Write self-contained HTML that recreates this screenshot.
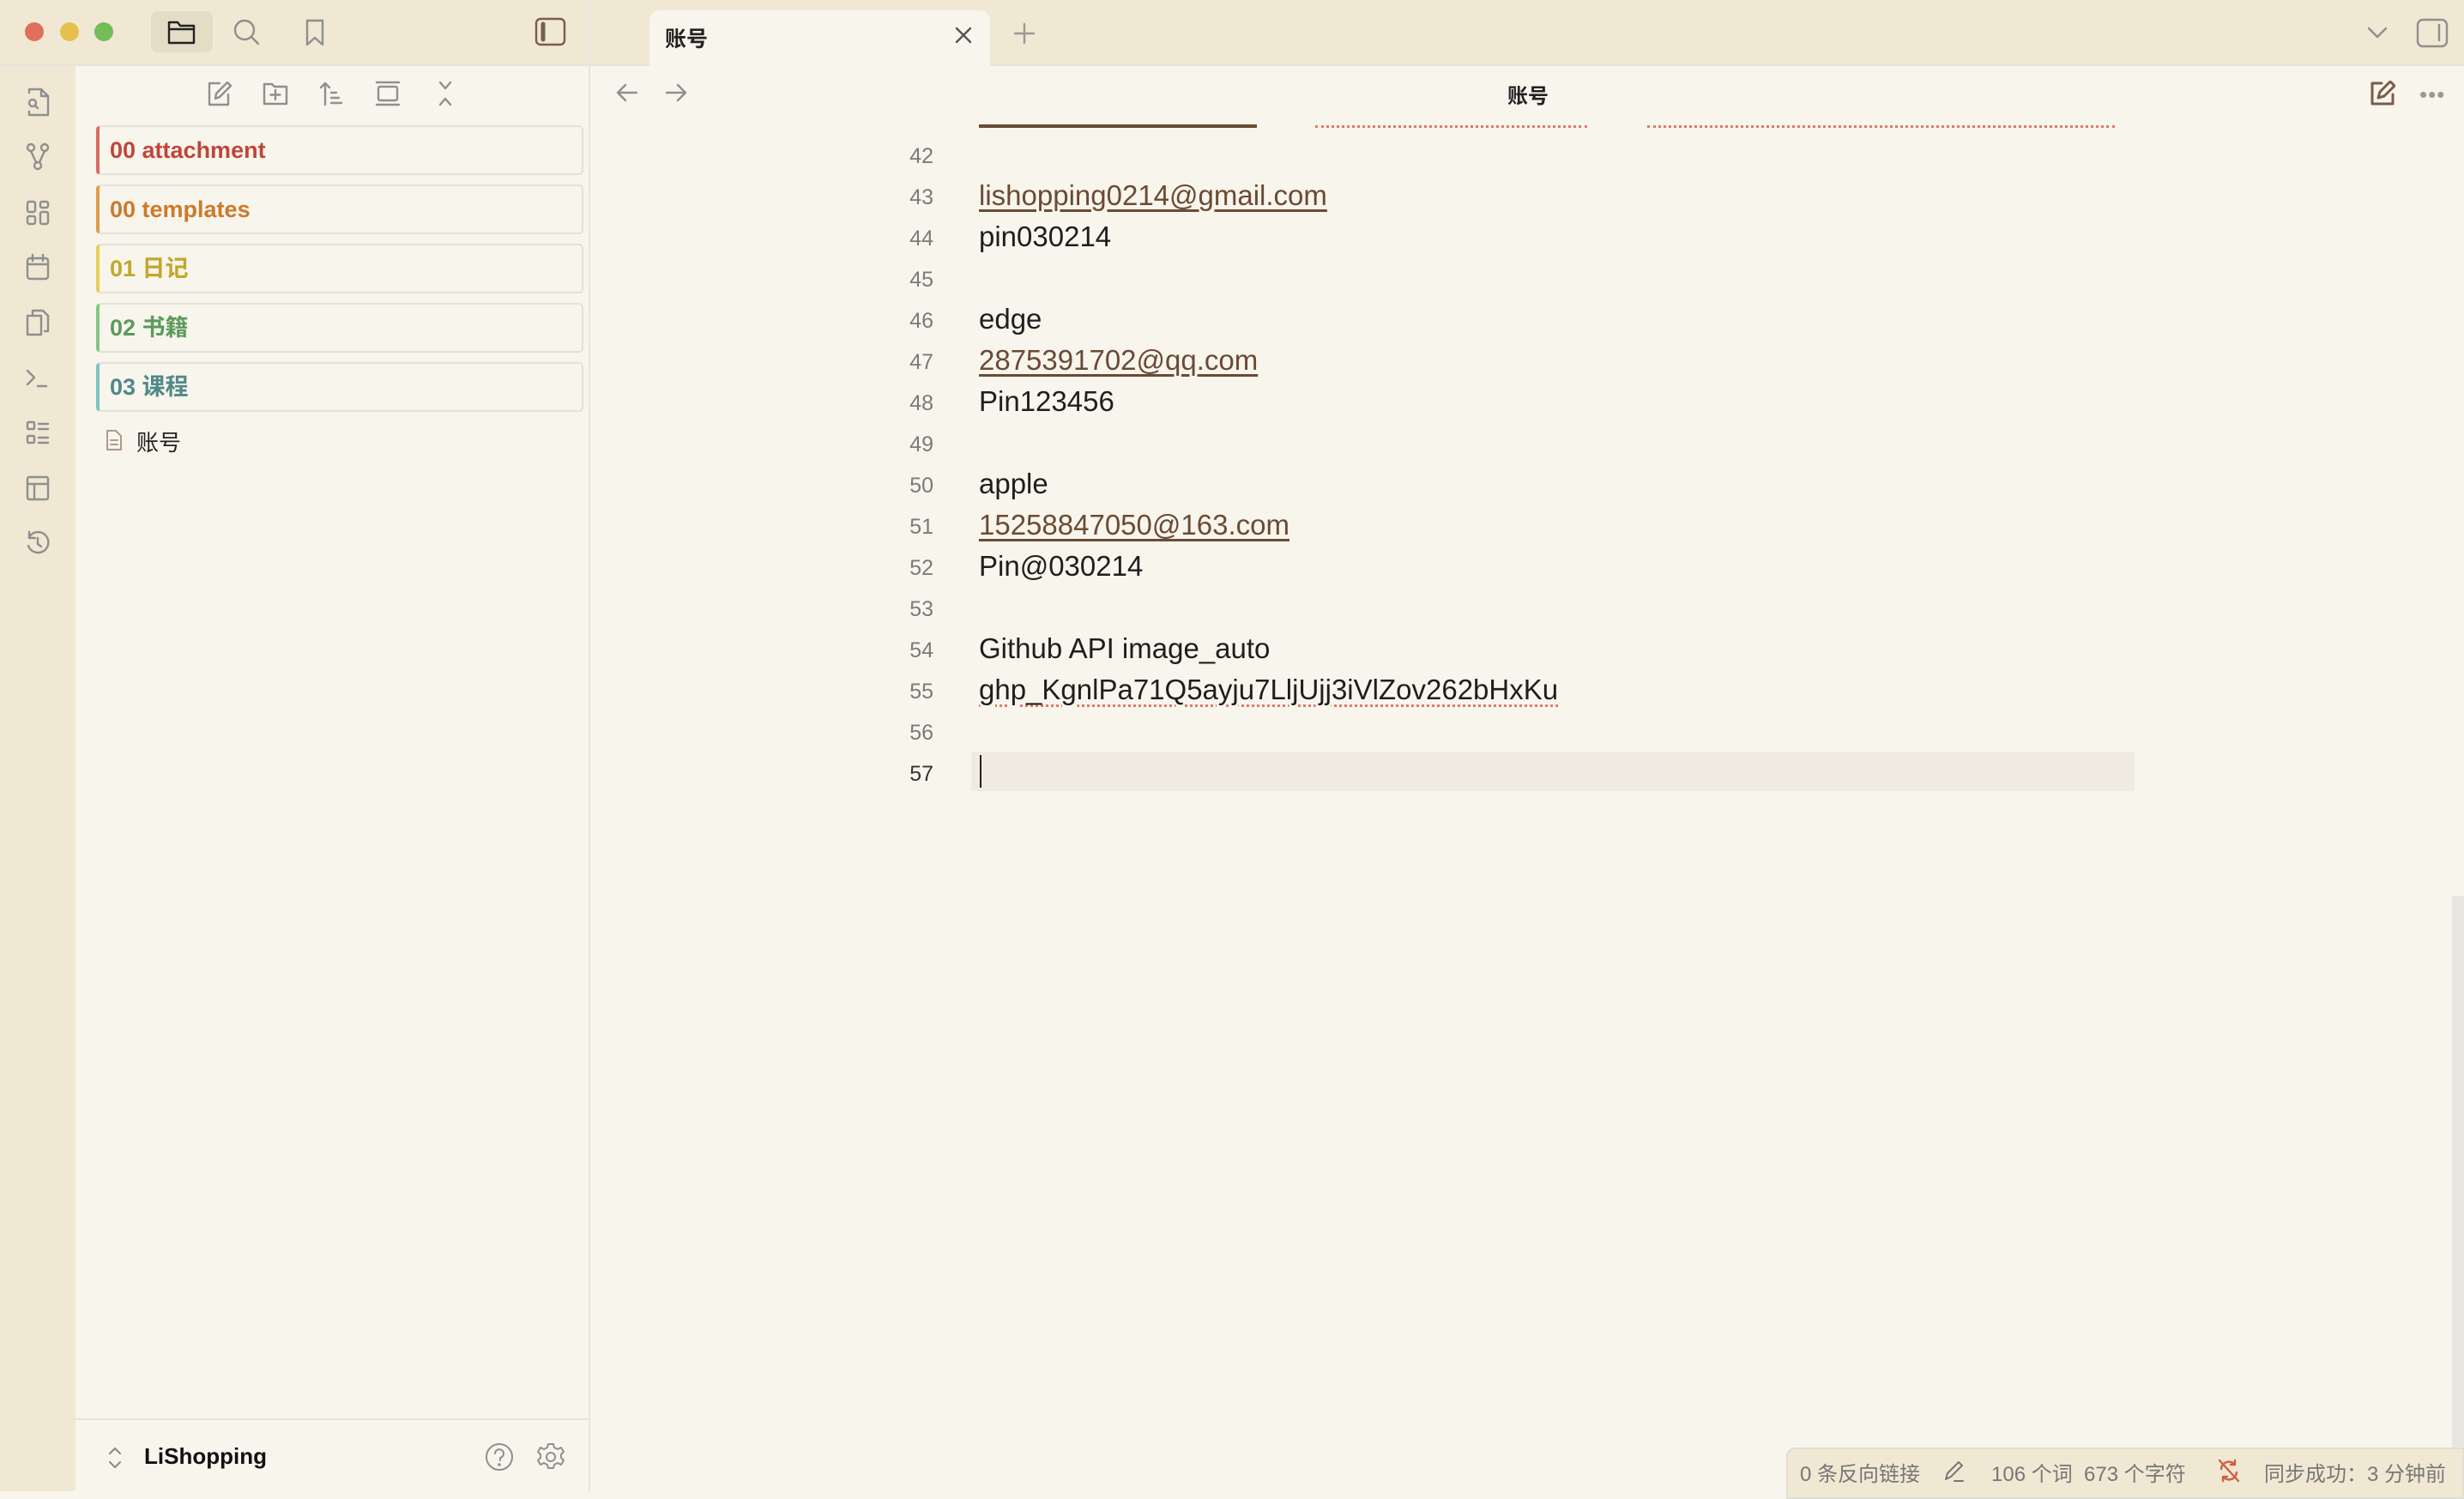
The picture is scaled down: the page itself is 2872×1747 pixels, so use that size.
<!DOCTYPE html>
<html><head><meta charset="utf-8"><style>
*{margin:0;padding:0;box-sizing:border-box}
body{width:2872px;height:1738px;overflow:hidden;background:#f8f5ec;font-family:"Liberation Sans","Noto Sans CJK SC",sans-serif;position:relative}
.a{position:absolute}
.ln{position:absolute;left:1000px;width:88px;text-align:right;color:#7a7a7a;font-size:25px;margin-top:3px}
.tx{position:absolute;left:1141px;color:#1e1e1e;font-size:33px;white-space:nowrap;margin-top:3px}
.lk{color:#6b4a35;text-decoration:underline;text-decoration-thickness:3px;text-underline-offset:5px}
.fold{position:absolute;left:112px;width:568px;height:58px;border:2px solid #e3e1dc;border-left-width:4px;border-radius:5px;background:#f8f5ec;font-size:27px;font-weight:bold;padding-left:12px;line-height:54px}
.ic{position:absolute;stroke:#8f8f8f;fill:none;stroke-width:2.4;stroke-linecap:round;stroke-linejoin:round}
</style></head><body>
<div class="a" style="left:0;top:0;width:2872px;height:77px;background:#f0e8d3;border-bottom:2px solid #e6e3dc"></div>
<div class="a" style="left:0;top:77px;width:88px;height:1661px;background:#f0e8d3"></div>
<div class="a" style="left:686px;top:0;width:2px;height:1738px;background:#e8e5de"></div>
<div class="a" style="left:88px;top:1653px;width:598px;height:2px;background:#e6e4df"></div>
<div class="a" style="left:29px;top:26px;width:22px;height:22px;border-radius:50%;background:#e0705b"></div>
<div class="a" style="left:70px;top:26px;width:22px;height:22px;border-radius:50%;background:#e6c04f"></div>
<div class="a" style="left:110px;top:26px;width:22px;height:22px;border-radius:50%;background:#73bd58"></div>
<div class="a" style="left:176px;top:13px;width:72px;height:48px;border-radius:8px;background:#e5dcc6"></div>
<svg class="ic" style="left:192px;top:20px;stroke:#222" width="40" height="36" viewBox="0 0 40 36"><path d="M5 6h10l3 4h16v20H5z M5 14h29"/></svg>
<svg class="ic" style="left:270px;top:20px" width="36" height="36" viewBox="0 0 36 36"><circle cx="15" cy="15" r="11"/><path d="M23 23l8 8"/></svg>
<svg class="ic" style="left:352px;top:20px" width="30" height="36" viewBox="0 0 30 36"><path d="M6 4h18v28l-9-8-9 8z"/></svg>
<svg class="ic" style="left:622px;top:19px;stroke:#7a5d48" width="40" height="36" viewBox="0 0 40 36"><rect x="3" y="3" width="33" height="30" rx="5"/><path d="M11 9v18" stroke-width="5"/></svg>
<div class="a" style="left:757px;top:12px;width:397px;height:67px;background:#f8f5ec;border-radius:12px 12px 0 0"></div>
<div class="a" style="left:775px;top:26px;font-size:25px;font-weight:bold;color:#222">账号</div>
<svg class="ic" style="left:1112px;top:30px;stroke:#555" width="22" height="22" viewBox="0 0 22 22"><path d="M3 3l16 16M19 3L3 19"/></svg>
<svg class="ic" style="left:1180px;top:25px;stroke:#999" width="28" height="28" viewBox="0 0 28 28"><path d="M14 3v22M3 14h22"/></svg>
<svg class="ic" style="left:2758px;top:28px" width="26" height="20" viewBox="0 0 26 20"><path d="M3 5l10 10 10-10"/></svg>
<svg class="ic" style="left:2815px;top:20px" width="40" height="36" viewBox="0 0 40 36"><rect x="3" y="3" width="34" height="31" rx="6"/><path d="M28 9v18"/></svg>
<svg class="ic" style="left:716px;top:95px" width="30" height="26" viewBox="0 0 30 26"><path d="M26 13H4M13 4l-9 9 9 9"/></svg>
<svg class="ic" style="left:773px;top:95px" width="30" height="26" viewBox="0 0 30 26"><path d="M4 13h22M17 4l9 9-9 9"/></svg>
<div class="a" style="left:1757px;top:92px;font-size:24px;color:#222;font-weight:bold">账号</div>
<svg class="ic" style="left:2762px;top:94px;stroke:#7a5d48;stroke-width:3" width="30" height="30" viewBox="0 0 30 30"><path d="M14 3H3v24h24V16"/><path d="M10 20l2-7 12-12 5 5-12 12z"/></svg>
<div class="a" style="left:2820px;top:95px;font-size:26px;color:#999;letter-spacing:1px">•••</div>
<svg class="ic" style="left:28px;top:100px" width="32" height="38" viewBox="0 0 32 38"><path d="M6 8V4h14l8 8v22H6v-4M20 4v8h8"/><circle cx="10" cy="20" r="4"/><path d="M13 23l3 3"/></svg>
<svg class="ic" style="left:28px;top:166px" width="32" height="34" viewBox="0 0 32 34"><circle cx="8" cy="6" r="4"/><circle cx="24" cy="6" r="4"/><circle cx="16" cy="27" r="4"/><path d="M8 10l6 13M24 10l-6 13"/></svg>
<svg class="ic" style="left:28px;top:231px" width="32" height="34" viewBox="0 0 32 34"><rect x="4" y="4" width="9" height="12" rx="2"/><rect x="19" y="4" width="9" height="7" rx="2"/><rect x="4" y="21" width="9" height="9" rx="2"/><rect x="19" y="16" width="9" height="14" rx="2"/></svg>
<svg class="ic" style="left:28px;top:294px" width="32" height="34" viewBox="0 0 32 34"><rect x="4" y="7" width="24" height="24" rx="3"/><path d="M4 14h24M10 3v7M22 3v7"/></svg>
<svg class="ic" style="left:28px;top:358px" width="32" height="36" viewBox="0 0 32 36"><path d="M10 8V4h12l6 6v18h-4M4 10h16v22H4z"/></svg>
<svg class="ic" style="left:28px;top:424px" width="32" height="32" viewBox="0 0 32 32"><path d="M4 8l8 8-8 8M16 26h10"/></svg>
<svg class="ic" style="left:28px;top:488px" width="32" height="34" viewBox="0 0 32 34"><rect x="4" y="4" width="8" height="8" rx="1"/><rect x="4" y="20" width="8" height="8" rx="1"/><path d="M17 6h11M17 12h11M17 22h11M17 28h11"/></svg>
<svg class="ic" style="left:28px;top:552px" width="32" height="34" viewBox="0 0 32 34"><rect x="4" y="4" width="24" height="26" rx="2"/><path d="M4 12h24M12 12v18"/></svg>
<svg class="ic" style="left:28px;top:616px" width="32" height="34" viewBox="0 0 32 34"><path d="M6 10a12 12 0 1 1-1 10M6 4v7h7"/><path d="M16 11v7l4 3"/></svg>
<svg class="ic" style="left:240px;top:92px" width="32" height="34" viewBox="0 0 32 34"><path d="M16 5H4v25h22V18"/><path d="M11 23l1-6 13-13 4 4-13 13z"/></svg>
<svg class="ic" style="left:305px;top:92px" width="32" height="34" viewBox="0 0 32 34"><path d="M3 6h9l3 3h14v20H3z M16 13v11M10.5 18.5h11"/></svg>
<svg class="ic" style="left:371px;top:92px" width="32" height="34" viewBox="0 0 32 34"><path d="M8 30V5M3 10l5-5 5 5M15 16h6M15 22h9M15 28h12"/></svg>
<svg class="ic" style="left:436px;top:92px" width="32" height="34" viewBox="0 0 32 34"><path d="M3 4h26M3 30h26"/><rect x="5" y="9" width="22" height="16" rx="2"/></svg>
<svg class="ic" style="left:503px;top:92px" width="32" height="34" viewBox="0 0 32 34"><path d="M10 4l6 7 6-7M10 30l6-7 6 7"/></svg>
<div class="fold" style="top:146px;border-left-color:#d96a60;color:#c0453a">00 attachment</div>
<div class="fold" style="top:215px;border-left-color:#e29a4b;color:#cc7a2b">00 templates</div>
<div class="fold" style="top:284px;border-left-color:#e6cf55;color:#c4a628">01 日记</div>
<div class="fold" style="top:353px;border-left-color:#83c783;color:#5c9a5c">02 书籍</div>
<div class="fold" style="top:422px;border-left-color:#7fc4c0;color:#4f8a88">03 课程</div>
<svg class="ic" style="left:122px;top:499px;stroke:#b09a8a;stroke-width:2" width="22" height="28" viewBox="0 0 22 28"><path d="M3 3h10l6 6v16H3z M7 14h8M7 19h8"/></svg>
<div class="a" style="left:159px;top:496px;font-size:26px;color:#222">账号</div>
<svg class="ic" style="left:124px;top:1684px;stroke:#888;stroke-width:2" width="20" height="30" viewBox="0 0 20 30"><path d="M4 10l6-6 6 6M4 20l6 6 6-6"/></svg>
<div class="a" style="left:168px;top:1682px;font-size:26px;font-weight:bold;color:#111">LiShopping</div>
<svg class="ic" style="left:564px;top:1680px;stroke-width:2" width="36" height="36" viewBox="0 0 36 36"><circle cx="18" cy="18" r="15"/><path d="M13 14a5 5 0 1 1 6 5v3"/><circle cx="18" cy="27" r="0.8"/></svg>
<svg class="ic" style="left:624px;top:1680px;stroke-width:2" width="36" height="36" viewBox="0 0 36 36"><circle cx="18" cy="18" r="5"/><path d="M15 3h6l1 4 4 2 4-2 3 5-3 3v4l3 3-3 5-4-2-4 2-1 4h-6l-1-4-4-2-4 2-3-5 3-3v-4l-3-3 3-5 4 2 4-2z"/></svg>
<div class="a" style="left:1141px;top:145px;width:324px;height:4px;background:#6b4a35"></div>
<div class="a" style="left:1533px;top:146px;width:317px;height:4px;border-top:3px dotted #e07a66"></div>
<div class="a" style="left:1920px;top:146px;width:545px;height:4px;border-top:3px dotted #e07a66"></div>
<div class="a" style="left:1132px;top:876px;width:1356px;height:46px;background:#efebe3"></div>
<div class="a" style="left:1142px;top:880px;width:2px;height:38px;background:#222"></div>
<div class="ln" style="top:165px">42</div>
<div class="ln" style="top:213px">43</div><div class="tx" style="top:206px"><span class="lk">lishopping0214@gmail.com</span></div>
<div class="ln" style="top:261px">44</div><div class="tx" style="top:254px">pin030214</div>
<div class="ln" style="top:309px">45</div>
<div class="ln" style="top:357px">46</div><div class="tx" style="top:350px">edge</div>
<div class="ln" style="top:405px">47</div><div class="tx" style="top:398px"><span class="lk">2875391702@qq.com</span></div>
<div class="ln" style="top:453px">48</div><div class="tx" style="top:446px">Pin123456</div>
<div class="ln" style="top:501px">49</div>
<div class="ln" style="top:549px">50</div><div class="tx" style="top:542px">apple</div>
<div class="ln" style="top:597px">51</div><div class="tx" style="top:590px"><span class="lk">15258847050@163.com</span></div>
<div class="ln" style="top:645px">52</div><div class="tx" style="top:638px">Pin@030214</div>
<div class="ln" style="top:693px">53</div>
<div class="ln" style="top:741px">54</div><div class="tx" style="top:734px">Github API image_auto</div>
<div class="ln" style="top:789px">55</div><div class="tx" style="top:782px;text-decoration:underline dotted #e07a66;text-decoration-thickness:3px;text-underline-offset:6px">ghp_KgnlPa71Q5ayju7LljUjj3iVlZov262bHxKu</div>
<div class="ln" style="top:837px">56</div>
<div class="ln" style="top:885px;color:#333">57</div>
<div class="a" style="left:2858px;top:1044px;width:14px;height:694px;background:#e9e6e0"></div>
<div class="a" style="left:2082px;top:1687px;width:790px;height:60px;background:#f0e8d3;border:2px solid #e0ddd6;border-radius:10px 0 0 0"></div>
<div class="a" style="left:2098px;top:1698px;font-size:24px;color:#777;white-space:nowrap">0 条反向链接</div>
<svg class="ic" style="left:2264px;top:1700px;stroke:#777;stroke-width:2" width="28" height="28" viewBox="0 0 28 28"><path d="M4 24l2-7L19 4l4 4L10 21zM14 26h10"/></svg>
<div class="a" style="left:2321px;top:1698px;font-size:24px;color:#777;white-space:nowrap">106 个词&nbsp;&nbsp;673 个字符</div>
<svg class="ic" style="left:2584px;top:1699px;stroke:#d06040;stroke-width:2.4" width="28" height="30" viewBox="0 0 28 30"><path d="M5 13a9 9 0 0 1 16-5M23 17a9 9 0 0 1-16 5M21 3v5h-5M7 27v-5h5M3 3l22 24"/></svg>
<div class="a" style="left:2639px;top:1698px;font-size:24px;color:#777;white-space:nowrap">同步成功：3 分钟前</div>
</body></html>
